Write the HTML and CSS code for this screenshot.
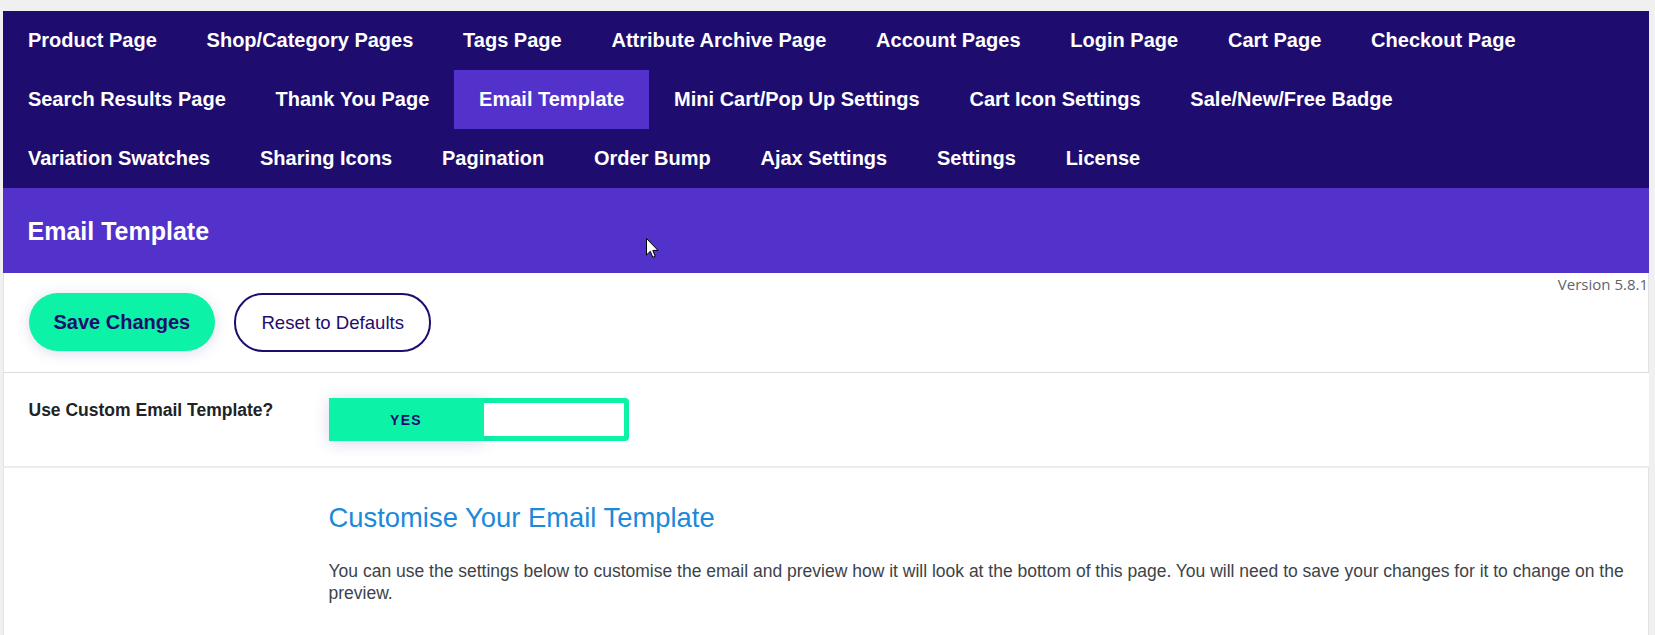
FILE: index.html
```html
<!DOCTYPE html>
<html lang="en">
<head>
<meta charset="utf-8">
<title>Email Template</title>
<link rel="stylesheet" href="styles.css">
</head>
<body>
<div class="wrap">
  <nav class="nav">
    <div class="nav-row">
      <a class="nav-item">Product Page</a>
      <a class="nav-item">Shop/Category Pages</a>
      <a class="nav-item">Tags Page</a>
      <a class="nav-item">Attribute Archive Page</a>
      <a class="nav-item">Account Pages</a>
      <a class="nav-item">Login Page</a>
      <a class="nav-item">Cart Page</a>
      <a class="nav-item">Checkout Page</a>
    </div>
    <div class="nav-row">
      <a class="nav-item">Search Results Page</a>
      <a class="nav-item">Thank You Page</a>
      <a class="nav-item active">Email Template</a>
      <a class="nav-item">Mini Cart/Pop Up Settings</a>
      <a class="nav-item">Cart Icon Settings</a>
      <a class="nav-item">Sale/New/Free Badge</a>
    </div>
    <div class="nav-row">
      <a class="nav-item">Variation Swatches</a>
      <a class="nav-item">Sharing Icons</a>
      <a class="nav-item">Pagination</a>
      <a class="nav-item">Order Bump</a>
      <a class="nav-item">Ajax Settings</a>
      <a class="nav-item">Settings</a>
      <a class="nav-item">License</a>
    </div>
  </nav>

  <header class="title-band">
    <h1 class="title">Email Template</h1>
  </header>

  <section class="toolbar">
    <div class="version">Version 5.8.1</div>
    <div class="buttons">
      <button class="btn btn-save">Save Changes</button>
      <button class="btn btn-reset">Reset to Defaults</button>
    </div>
  </section>

  <section class="setting-row">
    <div class="setting-label">Use Custom Email Template?</div>
    <div class="toggle">
      <span class="toggle-on">YES</span>
      <span class="toggle-off"></span>
    </div>
  </section>

  <section class="intro">
    <div class="intro-spacer"></div>
    <div class="intro-body">
      <h2 class="intro-title">Customise Your Email Template</h2>
      <p class="intro-text">You can use the settings below to customise the email and preview how it will look at the bottom of this page. You will need to save your changes for it to change on the preview.</p>
    </div>
  </section>
</div>

<svg class="cursor" width="13" height="21" viewBox="0 0 13 21" aria-hidden="true">
  <path d="M0.5 0.5 L0.5 17 L4.3 13.3 L6.8 19.3 L9.2 18.3 L6.8 12.4 L12 12.4 Z" fill="#ffffff" stroke="#000000" stroke-width="1" stroke-linejoin="miter"/>
</svg>
</body>
</html>
```

FILE: styles.css
```css
* {
  box-sizing: border-box;
}

html, body {
  margin: 0;
  padding: 0;
}

body {
  background: #f0f0f1;
  font-family: "Liberation Sans", Arial, sans-serif;
  height: 635px;
  overflow: hidden;
}

.wrap {
  margin: 11px 6px 0 3px;
  background: #ffffff;
  min-height: 624px;
}

/* navigation */
.nav {
  background: #1e0d6e;
  display: flex;
  flex-direction: column;
}

.nav-row {
  display: flex;
}

.nav-item {
  display: block;
  height: 59px;
  line-height: 59px;
  padding: 0 24.9px;
  color: #ffffff;
  font-size: 20px;
  font-weight: 700;
  white-space: nowrap;
  text-decoration: none;
}

.nav-item.active {
  background: #5331cb;
}

/* title */
.title-band {
  background: #5331cb;
  height: 85px;
  display: flex;
  align-items: center;
  padding-left: 24.5px;
}

.title {
  margin: 0;
  color: #ffffff;
  font-size: 25px;
  font-weight: 700;
  line-height: 30px;
}

/* toolbar */
.toolbar {
  padding: 2px 0 20px 24.5px;
  border-left: 1px solid #e2e2e4;
  border-right: 1px solid #e2e2e4;
  border-bottom: 1px solid #dcdcde;
}

.version {
  text-align: right;
  font-family: "Open Sans", "Noto Sans", sans-serif;
  font-size: 15px;
  line-height: 18px;
  height: 18px;
  color: #5f646b;
  padding-right: 0;
}

.buttons {
  display: flex;
  gap: 19px;
}

.btn {
  height: 58px;
  border-radius: 29px;
  font-family: "Liberation Sans", Arial, sans-serif;
  color: #1e0d6e;
  cursor: pointer;
  padding: 0 25px;
  white-space: nowrap;
}

.btn-save {
  background: #0cf2a7;
  border: none;
  font-size: 20px;
  font-weight: 700;
  box-shadow: 0 2px 14px rgba(70, 50, 150, 0.18);
}

.btn-reset {
  background: #ffffff;
  border: 2px solid #1e0d6e;
  font-size: 18.6px;
  font-weight: 400;
  width: 197px;
  height: 59px;
  padding: 0 20px;
}

/* setting row */
.setting-row {
  display: grid;
  grid-template-columns: 300px 1fr;
  padding: 25px 0 25px 24.5px;
  border-left: 1px solid #e2e2e4;
  border-bottom: 2px solid #ececec;
}

.setting-label {
  font-size: 17.5px;
  font-weight: 700;
  color: #1d2327;
  line-height: 24px;
}

.toggle {
  display: flex;
  width: 300px;
  height: 43px;
  background: #0cf2a7;
  border-radius: 0 4px 4px 0;
}

.toggle-on {
  width: 155px;
  display: flex;
  align-items: center;
  justify-content: center;
  font-size: 14px;
  font-weight: 700;
  letter-spacing: 1.4px;
  color: #1e0d6e;
  box-shadow: 0 2px 16px rgba(70, 50, 150, 0.2);
}

.toggle-off {
  flex: 1;
  background: #ffffff;
  margin: 5px 5px 5px 0;
}

/* intro */
.intro {
  display: grid;
  grid-template-columns: 300px 1fr;
  padding: 34px 10px 30px 24.5px;
  border-left: 1px solid #e2e2e4;
  border-right: 1px solid #e2e2e4;
  min-height: 170px;
}

.intro-title {
  margin: 0;
  font-size: 27.4px;
  font-weight: 400;
  line-height: 32px;
  color: #1b8ad9;
}

.intro-text {
  margin: 26px 0 0;
  font-size: 17.5px;
  line-height: 22px;
  color: #3c434a;
}

/* mouse pointer overlay */
.cursor {
  position: absolute;
  left: 646px;
  top: 238px;
}
```
